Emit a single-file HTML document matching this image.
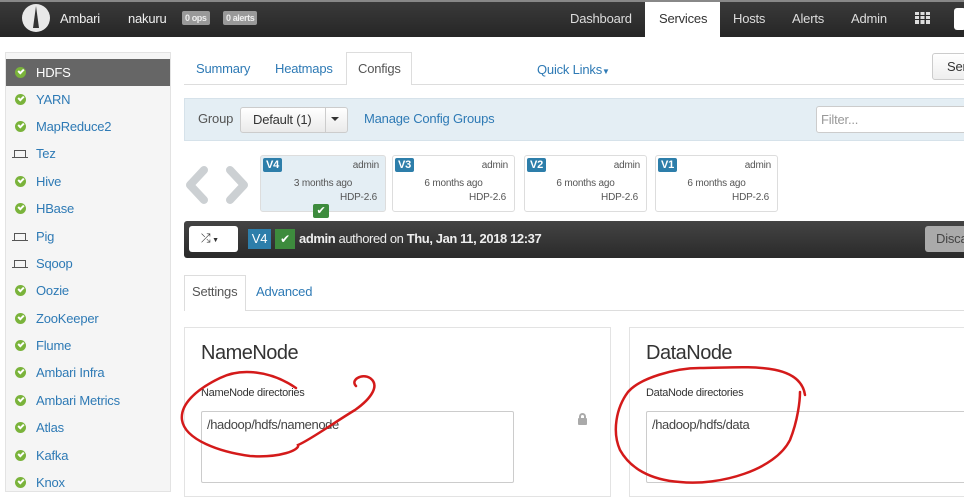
<!DOCTYPE html>
<html><head><meta charset="utf-8"><style>
*{box-sizing:border-box;margin:0;padding:0}
body{width:964px;height:486px;overflow:hidden;background:#fff;font-family:"Liberation Sans",sans-serif;font-size:13px;position:relative;color:#333;letter-spacing:-0.2px}
.a{position:absolute}
.nav{left:0;top:0;width:964px;height:37px;background:linear-gradient(#3a3a3a,#262626);border-top:2px solid #888}
.nt{color:#ddd;font-size:13px;top:11px}
.badge{background:#999;color:#eee;font-size:9px;font-weight:bold;padding:2px 3px;border-radius:2px;top:11px;letter-spacing:-0.4px}
.side{left:5px;top:52px;width:166px;height:440px;background:#f5f5f5;border:1px solid #e3e3e3}
.si{left:0;width:164px;height:27px;line-height:27px;color:#2e7ab5;font-size:13px;padding-left:30px}
.ok{position:absolute;left:9px;top:8px;width:11px;height:11px;border-radius:50%;background:#7ab33b}
.ok:after{content:"";position:absolute;left:3px;top:2px;width:4px;height:2px;border-left:2px solid #fff;border-bottom:2px solid #fff;transform:rotate(-45deg)}
.lap{position:absolute;left:8px;top:10px;width:12px;height:7px;border:1px solid #555;border-bottom:none}
.lap:after{content:"";position:absolute;left:-3px;top:6px;width:16px;height:1px;background:#555}
.link{color:#2e7ab5}
.vb{width:126px;height:57px;border:1px solid #ddd;border-radius:3px;background:#fff;font-size:10px;color:#555}
.vb .t{position:absolute;left:2px;top:2px;background:#2d7eaa;color:#fff;font-weight:bold;font-size:11px;padding:1px 3px;border-radius:2px}
.vb .ad{position:absolute;right:6px;top:4px}
.vb .ag{position:absolute;left:0;width:100%;text-align:center;top:22px}
.vb .h{position:absolute;right:8px;top:36px}
.pan{border:1px solid #e3e3e3;background:#fff}
.ta{border:1px solid #ccc;border-radius:2px;width:313px;height:72px;padding:5px;font-size:13px;color:#444}
</style></head><body>
<div class="a nav"></div>
<div class="a" style="left:22px;top:4px;width:28px;height:28px;border-radius:50%;background:#e8e8e8"></div>
<div class="a" style="left:33px;top:6px;width:6px;height:22px;background:#333;clip-path:polygon(50% 0,100% 100%,0 100%)"></div>
<div class="a nt" style="left:60px;color:#eee">Ambari</div>
<div class="a nt" style="left:128px;color:#eee">nakuru</div>
<div class="a badge" style="left:182px">0 ops</div>
<div class="a badge" style="left:223px">0 alerts</div>
<div class="a nt" style="left:570px">Dashboard</div>
<div class="a" style="left:645px;top:2px;width:75px;height:35px;background:#fff"></div>
<div class="a nt" style="left:659px;color:#333">Services</div>
<div class="a nt" style="left:733px">Hosts</div>
<div class="a nt" style="left:792px">Alerts</div>
<div class="a nt" style="left:851px">Admin</div>
<div class="a" style="left:915px;top:12px;width:15px;height:12px;background:repeating-linear-gradient(90deg,#ddd 0 4px,transparent 4px 5.5px)"></div>
<div class="a" style="left:915px;top:15px;width:15px;height:1px;background:#2a2a2a"></div>
<div class="a" style="left:915px;top:19px;width:15px;height:1px;background:#2a2a2a"></div>
<div class="a" style="left:954px;top:8px;width:12px;height:22px;background:#fff;border-radius:3px"></div>

<div class="a side">
<div class="a si" style="top:6px;background:#666;color:#fff"><span class="ok"></span>HDFS</div>
<div class="a si" style="top:33px"><span class="ok"></span>YARN</div>
<div class="a si" style="top:60px"><span class="ok"></span>MapReduce2</div>
<div class="a si" style="top:87px"><span class="lap"></span>Tez</div>
<div class="a si" style="top:115px"><span class="ok"></span>Hive</div>
<div class="a si" style="top:142px"><span class="ok"></span>HBase</div>
<div class="a si" style="top:170px"><span class="lap"></span>Pig</div>
<div class="a si" style="top:197px"><span class="lap"></span>Sqoop</div>
<div class="a si" style="top:224px"><span class="ok"></span>Oozie</div>
<div class="a si" style="top:252px"><span class="ok"></span>ZooKeeper</div>
<div class="a si" style="top:279px"><span class="ok"></span>Flume</div>
<div class="a si" style="top:306px"><span class="ok"></span>Ambari Infra</div>
<div class="a si" style="top:334px"><span class="ok"></span>Ambari Metrics</div>
<div class="a si" style="top:361px"><span class="ok"></span>Atlas</div>
<div class="a si" style="top:389px"><span class="ok"></span>Kafka</div>
<div class="a si" style="top:416px"><span class="ok"></span>Knox</div>
</div>

<div class="a" style="left:184px;top:84px;width:780px;height:1px;background:#ddd"></div>
<div class="a link" style="left:196px;top:61px">Summary</div>
<div class="a link" style="left:275px;top:61px">Heatmaps</div>
<div class="a" style="left:346px;top:52px;width:66px;height:33px;background:#fff;border:1px solid #ddd;border-bottom:none"></div>
<div class="a" style="left:358px;top:61px;color:#555">Configs</div>
<div class="a link" style="left:537px;top:62px">Quick Links<span style="font-size:8px">▼</span></div>
<div class="a" style="left:932px;top:53px;width:40px;height:27px;border:1px solid #ccc;border-radius:3px;background:linear-gradient(#fff,#eee);padding:5px 0 0 14px">Ser</div>

<div class="a" style="left:184px;top:98px;width:790px;height:43px;background:#e4eef4;border:1px solid #d6e2ea"></div>
<div class="a" style="left:198px;top:111px;color:#555">Group</div>
<div class="a" style="left:240px;top:107px;width:108px;height:26px;border:1px solid #ccc;border-radius:3px;background:linear-gradient(#fff,#eaeaea)"></div>
<div class="a" style="left:325px;top:107px;width:1px;height:26px;background:#ccc"></div>
<div class="a" style="left:253px;top:112px;color:#333">Default (1)</div>
<div class="a" style="left:331px;top:117px;border:4px solid transparent;border-top-color:#333"></div>
<div class="a link" style="left:364px;top:111px">Manage Config Groups</div>
<div class="a" style="left:816px;top:106px;width:160px;height:27px;border:1px solid #ccc;border-radius:3px;background:#fff;color:#999;padding:5px 4px">Filter...</div>

<svg class="a" style="left:184px;top:166px" width="66" height="40"><path d="M20 4 L6 19 L20 34 M46 4 L60 19 L46 34" fill="none" stroke="#ccd0d3" stroke-width="8" stroke-linecap="round" stroke-linejoin="round"/></svg>
<div class="a vb" style="left:260px;top:155px;background:#e4eef4"><span class="t">V4</span><span class="ad">admin</span><span class="ag">3 months ago</span><span class="h">HDP-2.6</span></div>
<div class="a" style="left:313px;top:204px;width:16px;height:14px;background:#3d8b3d;border-radius:2px;color:#fff;font-size:11px;text-align:center;line-height:14px">✔</div>
<div class="a vb" style="left:392px;top:155px;width:123px"><span class="t">V3</span><span class="ad">admin</span><span class="ag">6 months ago</span><span class="h">HDP-2.6</span></div>
<div class="a vb" style="left:524px;top:155px;width:123px"><span class="t">V2</span><span class="ad">admin</span><span class="ag">6 months ago</span><span class="h">HDP-2.6</span></div>
<div class="a vb" style="left:655px;top:155px;width:123px"><span class="t">V1</span><span class="ad">admin</span><span class="ag">6 months ago</span><span class="h">HDP-2.6</span></div>

<div class="a" style="left:184px;top:221px;width:790px;height:37px;background:linear-gradient(#444,#2a2a2a);border-radius:3px"></div>
<div class="a" style="left:189px;top:226px;width:49px;height:26px;background:#fff;border-radius:3px;font-size:12px;padding:5px 0 0 12px;color:#333">⤮<span style="font-size:7px"> ▼</span></div>
<div class="a" style="left:248px;top:229px;width:23px;height:20px;background:#2d7eaa;color:#fff;font-size:13px;text-align:center;line-height:20px">V4</div>
<div class="a" style="left:275px;top:229px;width:20px;height:20px;background:#3d8b3d;color:#fff;font-size:12px;text-align:center;line-height:20px">✔</div>
<div class="a" style="left:299px;top:231px;color:#eee;font-size:13px;letter-spacing:-0.4px"><b>admin</b> authored on <b>Thu, Jan 11, 2018 12:37</b></div>
<div class="a" style="left:925px;top:226px;width:50px;height:26px;background:#aaa;border-radius:3px;color:#444;padding:5px 0 0 11px">Discard</div>

<div class="a" style="left:184px;top:310px;width:790px;height:1px;background:#ddd"></div>
<div class="a" style="left:184px;top:275px;width:62px;height:36px;background:#fff;border:1px solid #ddd;border-bottom:none"></div>
<div class="a" style="left:192px;top:284px;color:#555">Settings</div>
<div class="a link" style="left:256px;top:284px">Advanced</div>

<div class="a pan" style="left:184px;top:327px;width:427px;height:170px"></div>
<div class="a pan" style="left:629px;top:327px;width:345px;height:170px"></div>
<div class="a" style="left:201px;top:342px;font-size:20px;color:#333;letter-spacing:-0.5px">NameNode</div>
<div class="a" style="left:646px;top:342px;font-size:20px;color:#333;letter-spacing:-0.5px">DataNode</div>
<div class="a" style="left:201px;top:387px;font-size:11px;color:#333;letter-spacing:-0.3px">NameNode directories</div>
<div class="a" style="left:646px;top:387px;font-size:11px;color:#333;letter-spacing:-0.3px">DataNode directories</div>
<div class="a ta" style="left:201px;top:411px;letter-spacing:-0.4px">/hadoop/hdfs/namenode</div>
<div class="a ta" style="left:646px;top:411px;width:320px;letter-spacing:-0.4px">/hadoop/hdfs/data</div>
<div class="a" style="left:578px;top:418px;width:9px;height:7px;background:#aaa;border-radius:1px"></div>
<div class="a" style="left:579px;top:413px;width:7px;height:7px;border:2px solid #aaa;border-bottom:none;border-radius:4px 4px 0 0"></div>

<svg class="a" style="left:0;top:0" width="964" height="486"><g fill="none" stroke="#d41a1a" stroke-width="2.5" stroke-linecap="round">
<path d="M296 388 C270 370 240 368 220 378 C195 390 180 405 182 420 C185 440 220 452 250 456 C280 458 300 450 298 445 C310 440 335 422 355 410 C372 398 380 385 370 378 C362 373 350 380 356 386"/>
<path d="M805 395 C800 360 740 368 700 368 C675 368 640 378 628 392 C616 408 612 432 620 450 C630 468 650 480 680 482 C720 486 775 470 790 440 C798 420 800 400 800 392"/>
</g></svg>
</body></html>
